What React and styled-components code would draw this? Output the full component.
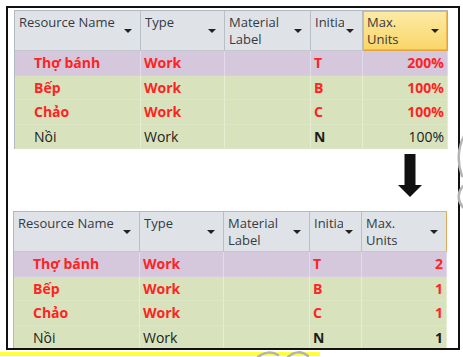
import React from 'react'
import styled, { createGlobalStyle } from 'styled-components'

const Global = createGlobalStyle`
body{
  margin: 0;
  background: #fff;
  font-family: "Open Sans", "Noto Sans", sans-serif;
}
`
const Page = styled.div`
position: relative;
width: 463px;
height: 357px;
overflow: hidden;
background: #fff;
`
const Frame = styled.div`
margin: 6px 0 0 6px;
width: 444px;
height: 338px;
border: 2px solid #111;
padding: 2px 0 0 6px;
box-sizing: content-box;
overflow: hidden;
display: flex;
flex-direction: column;
`
const Grid = styled.div`
display: grid;
grid-template-columns: 126px 84px 86px 52px 85px;
width: 433px;
flex: none;
margin-left: ${p => p.$shift || 0}px;
border-top: 1px solid #b3b9c1;
border-left: 1px solid #b3b9c1;
`
const Head = styled.div`
height: 40px;
display: flex;
align-items: flex-start;
padding: 3px 8px 0 4px;
box-sizing: border-box;
background: ${p => p.$hot ? 'linear-gradient(#fdeaa6, #f9d668)' : '#dfe3e8'};
border-right: 1px solid ${p => p.$hot ? '#e3a33a' : (p.$edge ? '#e0a85a' : '#b9bfc7')};
border-bottom: 1px solid ${p => p.$hot ? '#e3a33a' : '#c3c8cf'};
box-shadow: ${p => p.$hot ? 'inset 0 0 0 1px #f0b850' : 'none'};
color: #353a40;
font-size: 13px;
line-height: 17px;
`
const HeadText = styled.div`
flex: 1;
overflow: hidden;
white-space: pre;
`
const Drop = styled.div`
width: 0;
height: 0;
margin-top: 15px;
margin-left: 2px;
border-left: 4px solid transparent;
border-right: 4px solid transparent;
border-top: 4px solid #222;
`
const Cell = styled.div`
height: 24.5px;
line-height: 24px;
box-sizing: border-box;
padding: 0 ${p => p.$right ? '3px' : '0'} 0 ${p => p.$indent ? '19px' : '3px'};
background: ${p => p.$purple ? '#d5c8dc' : '#d8e3bd'};
border-right: 1px solid ${p => p.$purple ? '#e4dbe9' : '#e6eed2'};
border-bottom: 1px solid ${p => p.$purple ? '#d8cde0' : '#dde7c6'};
text-align: ${p => p.$right ? 'right' : 'left'};
color: ${p => p.$red ? '#ff2323' : '#1c1c1c'};
font-weight: ${p => p.$red || p.$bold ? 700 : 400};
font-size: 14px;
white-space: nowrap;
overflow: hidden;
`
const Between = styled.div`
height: 62px;
flex: none;
display: flex;
justify-content: flex-end;
padding: 5px 36px 0 0;
box-sizing: border-box;
`
const Highlight = styled.div`
position: absolute;
left: 0;
top: 352px;
width: 320px;
height: 4px;
background: #ffff3a;
`
const Sketch = styled.svg`
position: absolute;
left: 0;
top: 0;
pointer-events: none;
`

const heads = [
  { t: 'Resource Name' },
  { t: 'Type' },
  { t: 'Material\nLabel' },
  { t: 'Initials' },
  { t: 'Max.\nUnits' },
]

const rows = [
  { name: 'Thợ bánh', ini: 'T', pct: '200%', num: '2', red: true, purple: true },
  { name: 'Bếp', ini: 'B', pct: '100%', num: '1', red: true },
  { name: 'Chảo', ini: 'C', pct: '100%', num: '1', red: true },
  { name: 'Nồi', ini: 'N', pct: '100%', num: '1', red: false },
]

const Sheet = ({ hot, units, shift }) => (
  <Grid $shift={shift}>
    {heads.map((h, i) => (
      <Head key={i} $hot={hot && i === 4} $edge={!hot && i === 4}>
        <HeadText>{h.t}</HeadText>
        <Drop />
      </Head>
    ))}
    {rows.map((r, i) => (
      <React.Fragment key={i}>
        <Cell $indent $red={r.red} $purple={r.purple}>{r.name}</Cell>
        <Cell $red={r.red} $purple={r.purple}>Work</Cell>
        <Cell $purple={r.purple}></Cell>
        <Cell $red={r.red} $bold $purple={r.purple}>{r.ini}</Cell>
        <Cell $right $red={r.red} $bold={units === 'num'} $purple={r.purple}>
          {units === 'num' ? r.num : r.pct}
        </Cell>
      </React.Fragment>
    ))}
  </Grid>
)

const App = () => {
  return (
    <Page>
      <Global />
      <Frame>
        <Sheet hot units="pct" />
        <Between>
          <svg width="24" height="43" viewBox="0 0 24 43">
            <rect x="6.5" y="0" width="11" height="32" fill="#111" />
            <polygon points="0,31 24,31 12,43" fill="#111" />
          </svg>
        </Between>
        <Sheet units="num" shift={-1} />
      </Frame>
      <Highlight />
      <Sketch width="463" height="357" viewBox="0 0 463 357">
        <g fill="none" stroke="#b4b4b4" strokeWidth="2.5" strokeLinecap="round">
          <path d="M470 128 C458 140 456 160 462 176" />
          <path d="M463 186 C456 194 458 204 466 210" />
          <path d="M258 357 C264 352 272 351 278 355" />
          <path d="M288 357 C294 351 302 351 308 356" />
        </g>
      </Sketch>
    </Page>
  )
}

export default App
